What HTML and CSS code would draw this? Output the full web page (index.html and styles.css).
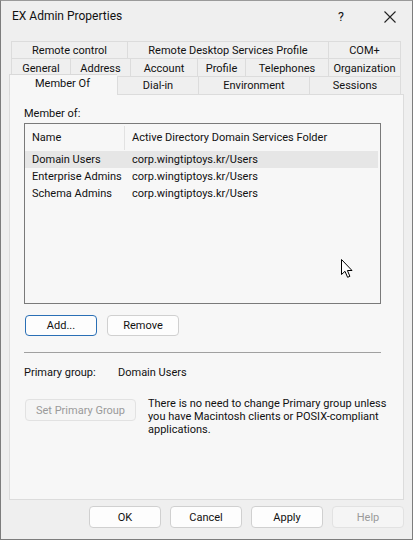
FILE: index.html
```html
<!DOCTYPE html>
<html>
<head>
<meta charset="utf-8">
<link rel="stylesheet" href="styles.css">
</head>
<body>
<div class="window">
  <div class="titlebar">
    <span class="title">EX Admin Properties</span>
    <span class="help">?</span>
    <span class="close"><svg width="12" height="12" viewBox="0 0 12 12"><path d="M0.5 0.5 L11.5 11.5 M11.5 0.5 L0.5 11.5" stroke="#222" stroke-width="1.1" fill="none"/></svg></span>
  </div>
  <div class="tabs">
    <div class="row r1">
      <div class="tab">Remote control</div>
      <div class="tab">Remote Desktop Services Profile</div>
      <div class="tab">COM+</div>
    </div>
    <div class="row r2">
      <div class="tab">General</div>
      <div class="tab">Address</div>
      <div class="tab">Account</div>
      <div class="tab">Profile</div>
      <div class="tab">Telephones</div>
      <div class="tab">Organization</div>
    </div>
    <div class="row r3">
      <div class="tab sel">Member Of</div>
      <div class="tab">Dial-in</div>
      <div class="tab">Environment</div>
      <div class="tab">Sessions</div>
    </div>
  </div>
  <div class="panel">
    <div class="label">Member of:</div>
    <div class="list">
      <div class="lrow head"><span class="c1">Name</span><span class="c2">Active Directory Domain Services Folder</span></div>
      <div class="lrow selrow"><span class="c1">Domain Users</span><span class="c2">corp.wingtiptoys.kr/Users</span></div>
      <div class="lrow"><span class="c1">Enterprise Admins</span><span class="c2">corp.wingtiptoys.kr/Users</span></div>
      <div class="lrow"><span class="c1">Schema Admins</span><span class="c2">corp.wingtiptoys.kr/Users</span></div>
    </div>
    <div class="btnrow">
      <button class="btn focus">Add...</button>
      <button class="btn">Remove</button>
    </div>
    <div class="sep"></div>
    <div class="primary"><span class="plabel">Primary group:</span><span>Domain Users</span></div>
    <div class="setrow">
      <button class="btn disabled wide">Set Primary Group</button>
      <p class="note">There is no need to change Primary group unless<br>you have Macintosh clients or POSIX-compliant<br>applications.</p>
    </div>
  </div>
  <div class="footer">
    <button class="btn">OK</button>
    <button class="btn">Cancel</button>
    <button class="btn">Apply</button>
    <button class="btn disabled">Help</button>
  </div>
  <svg class="cursor" width="13" height="20" viewBox="0 0 13 20"><path d="M0.5 0.5 L0.5 15.5 L4 12.3 L6.6 18.3 L8.9 17.3 L6.4 11.5 L11 11.5 Z" fill="#fff" stroke="#000" stroke-width="1" stroke-linejoin="round"/></svg>
</div>
</body>
</html>
```
FILE: styles.css
```css
* { box-sizing: border-box; }
html, body { margin: 0; padding: 0; }
body {
  font-family: Roboto, "Liberation Sans", Arial, sans-serif;
  font-size: 11px;
  color: #111;
  background: #efefef;
}
.window {
  position: relative;
  width: 413px;
  height: 540px;
  border: 1px solid #7d7d7d;
  border-top-color: #9a9a9a;
  background: #efefef;
  display: flex;
  flex-direction: column;
}
.titlebar {
  height: 40px;
  display: flex;
  align-items: flex-start;
  padding-top: 8px;
  padding-left: 11px;
}
.title { font-size: 12px; flex: 1; }
.help { font-size: 12.5px; margin-right: 40px; }
.close { margin-right: 16px; margin-top: 2px; }
.tabs { padding-left: 10px; }
.row { display: grid; width: 390px; }
.r1 { grid-template-columns: 116px 201px 73px; height: 17px; }
.r2 { grid-template-columns: 59px 60px 67px 48px 83px 73px; height: 18px; }
.r3 { grid-template-columns: 106px 81px 111px 92px; height: 18px; }
.tab {
  border: 1px solid #dcdcdc;
  border-bottom: none;
  border-right: none;
  text-align: center;
  line-height: 16px;
  padding-top: 1px;
  background: #efefef;
  white-space: nowrap;
}
.r2 .tab { padding-top: 2px; }
.row .tab:last-child { border-right: 1px solid #dcdcdc; }
.r3 .tab { line-height: 18px; padding-top: 0; }
.tab.sel {
  background: #f7f7f7;
  margin-left: -2px;
  margin-top: -2px;
  height: 21px;
  border-color: #d9d9d9;
  position: relative;
  z-index: 2;
  line-height: 18px;
  padding-right: 2px;
}
.panel {
  margin-left: 8px;
  width: 395px;
  height: 406px;
  background: #f7f7f7;
  border: 1px solid #dcdcdc;
  padding: 12px 0 0 14px;
}
.label { height: 14px; line-height: 14px; margin-bottom: 2px; }
.list {
  width: 357px;
  height: 181px;
  border: 1px solid #7a7a7a;
  background: #f7f7f7;
  padding: 1px 2px 0 0;
}
.lrow { display: flex; height: 17px; line-height: 17px; white-space: nowrap; }
.lrow .c1 { width: 100px; padding-left: 7px; flex: none; }
.lrow .c2 { padding-left: 7px; }
.lrow.head { height: 24px; line-height: 24px; margin-top: 1px; margin-bottom: 1px; }
.lrow.head .c1 { border-right: 1px solid #e2e2e2; }
.lrow.selrow { background: #e6e6e6; }
.btnrow { display: flex; gap: 10px; margin-top: 11px; padding-left: 1px; }
.btn {
  font-family: inherit;
  font-size: 11px;
  color: #111;
  width: 72px;
  height: 21px;
  padding: 0;
  border: 1px solid #d0d0d0;
  border-radius: 4px;
  background: #fdfdfd;
}
.btn.focus { border: 1.5px solid #2a6fb5; }
.btn.disabled { color: #9a9a9a; background: #f5f5f5; border-color: #e2e2e2; }
.btn.wide { width: 111px; height: 22px; }
.sep { width: 357px; height: 1px; background: #a0a0a0; margin-top: 16px; }
.primary { margin-top: 13px; line-height: 14px; display: flex; }
.plabel { width: 94px; }
.setrow { display: flex; gap: 12px; margin-top: 19px; padding-left: 1px; align-items: flex-start; }
.note { margin: -2px 0 0 0; line-height: 13px; white-space: nowrap; }
.footer { display: flex; gap: 9px; justify-content: flex-end; padding: 6px 8px 0 0; }
.footer .btn { height: 22px; }
.cursor { position: absolute; left: 340px; top: 258px; }
```
